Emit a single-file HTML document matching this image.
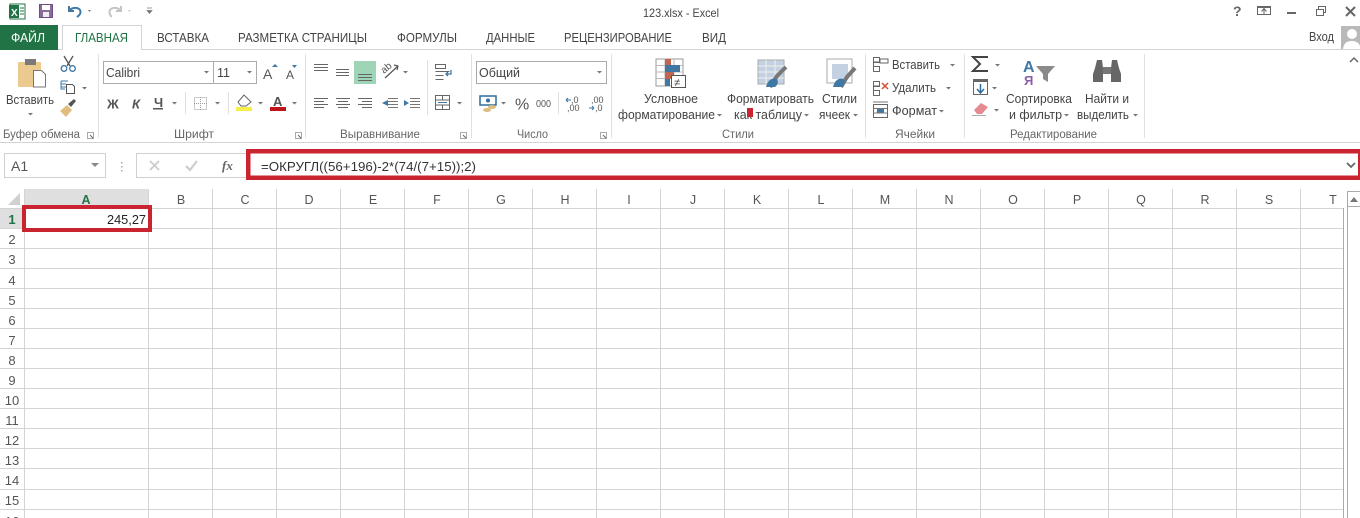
<!DOCTYPE html>
<html lang="ru"><head><meta charset="utf-8"><title>123.xlsx - Excel</title>
<style>
html,body{margin:0;padding:0;background:#fff;width:1360px;height:518px;overflow:hidden}
svg{display:block;position:absolute;left:0;top:0}
text{font-family:"Liberation Sans",sans-serif;font-size:12.500px;fill:#444;white-space:pre}
.h{font-size:12.500px;fill:#555;text-anchor:middle}
.n{font-size:13px;fill:#555;text-anchor:middle}
.t{font-size:12px;fill:#444}
.g{font-size:11.500px;fill:#666}
</style></head><body>
<svg width="1360" height="518" viewBox="0 0 1360 518" xmlns="http://www.w3.org/2000/svg">
<!-- title bar -->
<rect x="10" y="4" width="15" height="15" fill="#fff" stroke="#217346"/>
<rect x="9" y="5" width="10" height="13" fill="#217346"/>
<text x="11" y="16" style="font-size:10px;font-weight:bold;fill:#fff">X</text>
<path d="M20 8h4M20 11h4M20 14h4" stroke="#217346"/>
<rect x="39.500" y="4.500" width="13" height="13" fill="#8b6a9c" stroke="#6f4f83"/>
<rect x="42" y="5" width="8" height="5" fill="#fff"/><rect x="43" y="12" width="6" height="5" fill="#eee"/>
<path d="M69 6v5h5M69.500 10.500c3-4 11-3.500 11 1.500 0 2.500-2 4-3.500 5" fill="none" stroke="#3f77a5" stroke-width="2"/>
<path d="M88 10l3 0-1.500 2z" fill="#777"/>
<path d="M121 6v5h-5M120.500 10.500c-3-4-11-3.500-11 1.500 0 1.500 .6 3 2 5" fill="none" stroke="#c4c4c4" stroke-width="2"/>
<path d="M128 10l3 0-1.500 2z" fill="#ccc"/>
<path d="M147 8h5M147 10.500h5l-2.500 3z" fill="#777" stroke="#777" stroke-width=".7"/>
<text x="643" y="17" textLength="76" lengthAdjust="spacingAndGlyphs" class="t">123.xlsx - Excel</text>
<text x="1233" y="16" style="font-size:14px;font-weight:bold;fill:#666">?</text>
<rect x="1257.500" y="7.500" width="13" height="7" fill="none" stroke="#666"/><path d="M1257 6.500h14M1264 14v-5M1261.500 11.500l2.500-3 2.500 3" fill="none" stroke="#666"/>
<rect x="1287" y="12" width="9" height="2" fill="#666"/>
<path d="M1316.500 9.500h7v6h-7zM1318.500 9v-2.500h7v6h-2" fill="none" stroke="#666"/>
<path d="M1346 7l9 9M1355 7l-9 9" stroke="#666" stroke-width="2"/>
<!-- tabs -->
<path d="M0 49.500H62M141.500 49.500H1360" stroke="#d4d4d4"/>
<rect x="0" y="25" width="58" height="25" fill="#217346"/>
<path d="M62.500 50V25.500H141.500V50" fill="#fff" stroke="#d4d4d4"/>
<text x="11" y="42" textLength="34" lengthAdjust="spacingAndGlyphs" style="fill:#fff">ФАЙЛ</text>
<text x="75" y="42" textLength="53" lengthAdjust="spacingAndGlyphs" style="fill:#217346">ГЛАВНАЯ</text>
<text x="157" y="42" textLength="52" lengthAdjust="spacingAndGlyphs">ВСТАВКА</text>
<text x="238" y="42" textLength="129" lengthAdjust="spacingAndGlyphs">РАЗМЕТКА СТРАНИЦЫ</text>
<text x="397" y="42" textLength="60" lengthAdjust="spacingAndGlyphs">ФОРМУЛЫ</text>
<text x="486" y="42" textLength="49" lengthAdjust="spacingAndGlyphs">ДАННЫЕ</text>
<text x="564" y="42" textLength="108" lengthAdjust="spacingAndGlyphs">РЕЦЕНЗИРОВАНИЕ</text>
<text x="702" y="42" textLength="24" lengthAdjust="spacingAndGlyphs">ВИД</text>
<text x="1309" y="41" textLength="25" lengthAdjust="spacingAndGlyphs">Вход</text>
<rect x="1341" y="26" width="19" height="23" fill="#b9b9b9"/><circle cx="1352" cy="34" r="5" fill="#fff"/><path d="M1343 49c1-7 5-8 9-8s7 2 8 5v3z" fill="#fff"/>
<!-- ribbon lines -->
<path d="M0 142.500H1360" stroke="#d4d4d4"/>
<path d="M98.500 54V138M305.500 54V138M471.500 54V138M611.500 54V138M865.500 54V138M964.500 54V138M1144.500 54V138" stroke="#e1e1e1"/>
<path d="M185.500 92V114M228.500 92V114M427.500 60V115M558.500 92V114" stroke="#e1e1e1"/>
<path d="M1350 62l4-4 4 4" fill="none" stroke="#666" stroke-width="1.500"/>
<!-- clipboard -->
<rect x="18" y="62" width="23" height="25" rx="1" fill="#ecc98e"/>
<rect x="25" y="59" width="11" height="6" fill="#7a7a7a"/>
<path d="M33.500 70.500h8l4 4v12.500h-12z" fill="#fff" stroke="#777"/>
<text x="6" y="104" textLength="48" lengthAdjust="spacingAndGlyphs">Вставить</text>
<path d="M28 113h5l-2.500 2.500z" fill="#777"/>
<path d="M64 56l6 10M73 56l-6 10" stroke="#555" stroke-width="1.300"/>
<circle cx="64" cy="68.500" r="2.800" fill="none" stroke="#3f77a5" stroke-width="1.300"/><circle cx="72.500" cy="68.500" r="2.800" fill="none" stroke="#3f77a5" stroke-width="1.300"/>
<path d="M61 81h7M61 84h5M61 87h5M61 81v8h4" fill="none" stroke="#3f77a5"/>
<path d="M66.500 84.500h6l2 2v7h-8z" fill="#fff" stroke="#555"/>
<path d="M82 87h5l-2.500 2.500z" fill="#777"/>
<path d="M60 111l7-6 5 5-6 7z" fill="#e0bd7e"/><path d="M68 104l6-5 2 2-5 6z" fill="#555"/>
<text x="3" y="138" textLength="77" lengthAdjust="spacingAndGlyphs" class="g">Буфер обмена</text>
<path d="M87.500 132.500h6v6h-6z" fill="none" stroke="#aaa"/><path d="M90 135l3 3" stroke="#666"/>
<!-- font -->
<rect x="103.500" y="61.500" width="110" height="22" fill="#fff" stroke="#ababab"/>
<rect x="213.500" y="61.500" width="43" height="22" fill="#fff" stroke="#ababab"/>
<text x="106" y="77" textLength="34" lengthAdjust="spacingAndGlyphs">Calibri</text>
<text x="217" y="77">11</text>
<path d="M204 71h5l-2.500 2.500zM247 71h5l-2.500 2.500z" fill="#777"/>
<text x="263" y="79" style="font-size:14px;fill:#555">A</text><path d="M272 67l3-3 3 3z" fill="#3f77a5"/>
<text x="286" y="79" style="font-size:12px;fill:#555">A</text><path d="M292 65h5l-2.500 3z" fill="#3f77a5"/>
<text x="107" y="108.500" style="font-weight:bold;font-size:13px;fill:#555">Ж</text>
<text x="132" y="108.500" style="font-weight:bold;font-style:italic;font-size:13px;fill:#555">К</text>
<text x="154" y="107" style="font-weight:bold;font-size:13px;fill:#555">Ч</text><rect x="153" y="108" width="10" height="1.500" fill="#555"/>
<path d="M172 102h5l-2.500 2.500zM215 102h5l-2.500 2.500zM258 102h5l-2.500 2.500zM292 102h5l-2.500 2.500z" fill="#777"/>
<path d="M194.500 97.500h12v12h-12zM200.500 97v13M194 103.500h13" fill="none" stroke="#999" stroke-dasharray="1 1"/>
<path d="M238 102l6-7 7 7-5 4h-5z" fill="#fff" stroke="#666"/><rect x="236" y="107" width="16" height="4" fill="#f5ee4b"/>
<text x="273" y="106" style="font-size:13px;font-weight:bold;fill:#555">A</text><rect x="270" y="107" width="16" height="4" fill="#c0141b"/>
<text x="174" y="138" textLength="40" lengthAdjust="spacingAndGlyphs" class="g">Шрифт</text>
<path d="M295.500 132.500h6v6h-6z" fill="none" stroke="#aaa"/><path d="M298 135l3 3" stroke="#666"/>
<!-- align -->
<rect x="354" y="61" width="22" height="23" fill="#9fd5b7"/>
<path d="M314 64.500h14M314 67.500h14M314 70.500h14M336 69.500h13M336 72.500h13M336 75.500h13M358 74.500h14M358 77.500h14M358 80.500h14" stroke="#666"/>
<text x="384" y="74" transform="rotate(-40 384 74)" style="font-size:10px;fill:#555">ab</text>
<path d="M385 78l13-12M394 65l4 1-1 4" fill="none" stroke="#555" stroke-width="1.200"/>
<path d="M403 71h5l-2.500 2.500z" fill="#777"/>
<path d="M314 98.500h14M314 101.500h10M314 104.500h14M314 107.500h10M336 98.500h14M338 101.500h10M336 104.500h14M338 107.500h10M358 98.500h14M362 101.500h10M358 104.500h14M362 107.500h10" stroke="#666"/>
<path d="M388 98.500h10M388 101.500h10M388 104.500h10M388 107.500h10M410 98.500h10M410 101.500h10M410 104.500h10M410 107.500h10" stroke="#777"/>
<path d="M382 103h6v-3zM382 103h6v3zM404 100v6l5-3z" fill="#3f77a5"/>
<path d="M435.500 64.500h10v4h-10zM435.500 71.500h14M435.500 75.500h8M435.500 79.500h8" fill="none" stroke="#666"/>
<path d="M451 70v4h-5M448 72l-2 2 2 2" fill="none" stroke="#3f77a5" stroke-width="1.300"/>
<path d="M435.500 95.500h14v14h-14zM435.500 100h14M435.500 105h14M442.500 95v5M442.500 105v5" fill="none" stroke="#666"/>
<path d="M438 102.500h9" stroke="#3f77a5"/>
<path d="M457 102h5l-2.500 2.500z" fill="#777"/>
<text x="340" y="138" textLength="80" lengthAdjust="spacingAndGlyphs" class="g">Выравнивание</text>
<path d="M460.500 132.500h6v6h-6z" fill="none" stroke="#aaa"/><path d="M463 135l3 3" stroke="#666"/>
<!-- number -->
<rect x="476.500" y="61.500" width="130" height="22" fill="#fff" stroke="#ababab"/>
<text x="479" y="77" textLength="41" lengthAdjust="spacingAndGlyphs">Общий</text>
<path d="M597 71h5l-2.500 2.500z" fill="#777"/>
<rect x="480" y="96" width="16" height="9" fill="#fff" stroke="#2f6d9f" stroke-width="1.500"/><circle cx="488" cy="100.500" r="2" fill="#2f6d9f"/>
<ellipse cx="492" cy="107" rx="4" ry="2" fill="#e0bd7e"/><ellipse cx="487" cy="110" rx="4" ry="2" fill="#e0bd7e"/>
<path d="M501 102h5l-2.500 2.500z" fill="#777"/>
<text x="515" y="109.500" style="font-size:16px;fill:#555">%</text>
<text x="536" y="107" textLength="15" lengthAdjust="spacingAndGlyphs" style="font-size:10px;fill:#555">000</text>
<text x="571" y="103" style="font-size:9px;fill:#555">,0</text><text x="567" y="111" style="font-size:9px;fill:#555">,00</text><path d="M566 100h5M566 100l2-2M566 100l2 2" fill="none" stroke="#3f77a5"/>
<text x="591" y="103" style="font-size:9px;fill:#555">,00</text><text x="595" y="111" style="font-size:9px;fill:#555">,0</text><path d="M589 108h5M594 108l-2-2M594 108l-2 2" fill="none" stroke="#3f77a5"/>
<text x="517" y="138" textLength="31" lengthAdjust="spacingAndGlyphs" class="g">Число</text>
<path d="M600.500 132.500h6v6h-6z" fill="none" stroke="#aaa"/><path d="M603 135l3 3" stroke="#666"/>
<!-- styles -->
<rect x="656" y="59" width="27" height="27" fill="#fff" stroke="#999"/>
<path d="M656 65.500h27M656 72h27M656 78.500h27M665 59v27M674 59v27" stroke="#bbb"/>
<rect x="665" y="59" width="6" height="6" fill="#c0674f"/><rect x="665" y="65" width="15" height="7" fill="#3f77a5"/><rect x="665" y="72" width="9" height="7" fill="#c0674f"/><rect x="665" y="79" width="5" height="7" fill="#3f77a5"/>
<rect x="671.500" y="75.500" width="14" height="12" fill="#fff" stroke="#555"/>
<text x="674" y="86" style="font-size:11px;fill:#444">≠</text>
<text x="644" y="103" textLength="54" lengthAdjust="spacingAndGlyphs">Условное</text>
<text x="618" y="119" textLength="97" lengthAdjust="spacingAndGlyphs">форматирование</text>
<path d="M717 114h5l-2.500 2.500z" fill="#777"/>
<rect x="758" y="60" width="26" height="24" fill="#c3d1e2" stroke="#aaa"/>
<path d="M758 66h26M758 72h26M758 78h26M766 60v24M775 60v24" stroke="#eee"/>
<path d="M770 87l7-11 9-9" stroke="#777" stroke-width="4" fill="none"/>
<path d="M766 87c2-8 7-9 10-8s2 6-1 8z" fill="#3f77a5"/>
<text x="727" y="103" textLength="87" lengthAdjust="spacingAndGlyphs">Форматировать</text>
<text x="734" y="119" textLength="68" lengthAdjust="spacingAndGlyphs">как таблицу</text>
<path d="M804 114h5l-2.500 2.500z" fill="#777"/>
<rect x="747" y="108" width="6" height="9" fill="#c9242f"/>
<rect x="827" y="59" width="25" height="24" fill="#fff" stroke="#aaa"/><rect x="832" y="64" width="16" height="15" fill="#c3d1e2"/>
<path d="M841 87l6-10 8-9" stroke="#777" stroke-width="4" fill="none"/>
<path d="M833 87c2-8 7-9 10-8s2 6-1 8z" fill="#3f77a5"/>
<text x="822" y="103" textLength="35" lengthAdjust="spacingAndGlyphs">Стили</text>
<text x="819" y="119" textLength="31" lengthAdjust="spacingAndGlyphs">ячеек</text>
<path d="M853 114h5l-2.500 2.500z" fill="#777"/>
<text x="722" y="138" textLength="32" lengthAdjust="spacingAndGlyphs" class="g">Стили</text>
<!-- cells -->
<path d="M873.500 57.500h6v5h-6zM873.500 66.500h6v5h-6zM879.500 62h-6v5M880 59h8v4h-8z" fill="none" stroke="#666"/>
<text x="892" y="69" textLength="48" lengthAdjust="spacingAndGlyphs">Вставить</text>
<path d="M950 64h5l-2.500 2.500z" fill="#777"/>
<path d="M873.500 81.500h6v5h-6zM873.500 90.500h6v5h-6zM879.500 86h-6v5" fill="none" stroke="#666"/>
<path d="M882 83l6 6M888 83l-6 6" stroke="#d0512f" stroke-width="1.500"/>
<text x="892" y="92" textLength="44" lengthAdjust="spacingAndGlyphs">Удалить</text>
<path d="M946 87h5l-2.500 2.500z" fill="#777"/>
<rect x="873.500" y="104.500" width="14" height="13" fill="#fff" stroke="#666"/><rect x="877" y="108" width="7" height="5" fill="#3f77a5"/>
<path d="M873 102h15M873.500 108.500h14M873.500 113h14" stroke="#777"/>
<text x="892" y="115" textLength="45" lengthAdjust="spacingAndGlyphs">Формат</text>
<path d="M939 110h5l-2.500 2.500z" fill="#777"/>
<text x="895" y="138" textLength="40" lengthAdjust="spacingAndGlyphs" class="g">Ячейки</text>
<!-- editing -->
<path d="M988 57h-15l7 7-7 7h15" fill="none" stroke="#444" stroke-width="2"/>
<path d="M995 64h5l-2.500 2.500zM992 87h5l-2.500 2.500zM994 109h5l-2.500 2.500z" fill="#777"/>
<rect x="973.500" y="79.500" width="14" height="15" fill="#fff" stroke="#666"/><rect x="973" y="79" width="15" height="3" fill="#666"/>
<path d="M980.500 84v8M977 89l3.500 4 3.500-4" fill="none" stroke="#2f6d9f" stroke-width="1.500"/>
<path d="M974 110l7-7 7 4-6 7h-5z" fill="#e58a90"/><path d="M972 115.500h14" stroke="#aaa"/>
<text x="1023" y="72" style="font-size:16px;font-weight:bold;fill:#3f77a5">A</text>
<text x="1024" y="85" style="font-size:13px;font-weight:bold;fill:#8b5fa8">Я</text>
<path d="M1036 66h19l-7 8v8l-5-3v-5z" fill="#8a8a8a"/>
<text x="1006" y="103" textLength="66" lengthAdjust="spacingAndGlyphs">Сортировка</text>
<text x="1009" y="119" textLength="53" lengthAdjust="spacingAndGlyphs">и фильтр</text>
<path d="M1064 114h5l-2.500 2.500z" fill="#777"/>
<path d="M1095 68l2-8h5l1 8v14h-10v-8zM1119 68l-2-8h-5l-1 8v14h10v-8z" fill="#666"/><rect x="1103" y="67" width="8" height="7" fill="#777"/>
<text x="1085" y="103" textLength="44" lengthAdjust="spacingAndGlyphs">Найти и</text>
<text x="1077" y="119" textLength="52" lengthAdjust="spacingAndGlyphs">выделить</text>
<path d="M1133 114h5l-2.500 2.500z" fill="#777"/>
<text x="1010" y="138" textLength="87" lengthAdjust="spacingAndGlyphs" class="g">Редактирование</text>
<!-- formula bar -->
<rect x="4.500" y="153.500" width="101" height="24" fill="#fff" stroke="#d0d0d0"/>
<text x="11" y="171" style="font-size:14px;fill:#555">A1</text>
<path d="M91 163h8l-4 4z" fill="#888"/>
<path d="M121 162h1.500v1.500H121zM121 166h1.500v1.500H121zM121 170h1.500v1.500H121z" fill="#aaa"/>
<rect x="136.500" y="153.500" width="112" height="24" fill="#fff" stroke="#d0d0d0"/>
<path d="M150 161l9 9M159 161l-9 9" stroke="#ccc" stroke-width="1.800"/>
<path d="M186 166l4 4 7-9" fill="none" stroke="#ccc" stroke-width="2.200"/>
<text x="222" y="170" style="font-family:'Liberation Serif',serif;font-style:italic;font-size:13px;font-weight:bold;fill:#666">fx</text>
<rect x="248.250" y="151.250" width="1112" height="26.500" fill="#fff" stroke="#c9242f" stroke-width="4.500"/>
<text x="261" y="171" textLength="215" lengthAdjust="spacingAndGlyphs" style="font-size:13px;fill:#333">=ОКРУГЛ((56+196)-2*(74/(7+15));2)</text>
<path d="M1347 163l4 4 4-4" fill="none" stroke="#666" stroke-width="1.800"/>
<!-- sheet headers -->
<rect x="24" y="189" width="124" height="19" fill="#dfdfdf"/>
<rect x="0" y="209" width="24" height="20" fill="#dfdfdf"/>
<path d="M8 205h12v-12z" fill="#d0d0d0"/>
<!-- grid -->
<path d="M0 208.500H1343M0 228.500H1343M0 248.500H1343M0 268.500H1343M0 288.500H1343M0 308.500H1343M0 328.500H1343M0 348.500H1343M0 368.500H1343M0 388.500H1343M0 408.500H1343M0 428.500H1343M0 448.500H1343M0 468.500H1343M0 489.500H1343M0 509.500H1343" stroke="#d4d4d4"/>
<path d="M24.500 189V518M148.500 189V518M212.500 189V518M276.500 189V518M340.500 189V518M404.500 189V518M468.500 189V518M532.500 189V518M596.500 189V518M660.500 189V518M724.500 189V518M788.500 189V518M852.500 189V518M916.500 189V518M980.500 189V518M1044.500 189V518M1108.500 189V518M1172.500 189V518M1236.500 189V518M1300.500 189V518" stroke="#d4d4d4"/>
<path d="M1343.500 208V518" stroke="#ababab"/>
<path d="M1347.500 191V518" stroke="#ababab"/><path d="M1347 206.500H1360M1347 191.500H1360" stroke="#ababab"/>
<path d="M1350 202l4-5 4 5z" fill="#777"/>
<text class="h" x="86" y="204" style="fill:#217346;font-weight:bold">A</text>
<text class="h" x="181" y="204">B</text><text class="h" x="245" y="204">C</text><text class="h" x="309" y="204">D</text><text class="h" x="373" y="204">E</text><text class="h" x="437" y="204">F</text><text class="h" x="501" y="204">G</text><text class="h" x="565" y="204">H</text><text class="h" x="629" y="204">I</text><text class="h" x="693" y="204">J</text><text class="h" x="757" y="204">K</text><text class="h" x="821" y="204">L</text><text class="h" x="885" y="204">M</text><text class="h" x="949" y="204">N</text><text class="h" x="1013" y="204">O</text><text class="h" x="1077" y="204">P</text><text class="h" x="1141" y="204">Q</text><text class="h" x="1205" y="204">R</text><text class="h" x="1269" y="204">S</text><text class="h" x="1333" y="204">T</text>
<text class="n" x="12" y="224" style="fill:#217346;font-weight:bold">1</text>
<text class="n" x="12" y="244">2</text><text class="n" x="12" y="264">3</text><text class="n" x="12" y="285">4</text><text class="n" x="12" y="305">5</text><text class="n" x="12" y="325">6</text><text class="n" x="12" y="345">7</text><text class="n" x="12" y="365">8</text><text class="n" x="12" y="385">9</text><text class="n" x="12" y="405">10</text><text class="n" x="12" y="425">11</text><text class="n" x="12" y="445">12</text><text class="n" x="12" y="465">13</text><text class="n" x="12" y="485">14</text><text class="n" x="12" y="505">15</text><text class="n" x="12" y="526">16</text>
<!-- red cell box -->
<rect x="24" y="207" width="126" height="23" fill="#fff" stroke="#c9242f" stroke-width="4"/>
<text x="107" y="224" textLength="39" lengthAdjust="spacingAndGlyphs" style="font-size:13px;fill:#222">245,27</text>
</svg>
</body></html>
